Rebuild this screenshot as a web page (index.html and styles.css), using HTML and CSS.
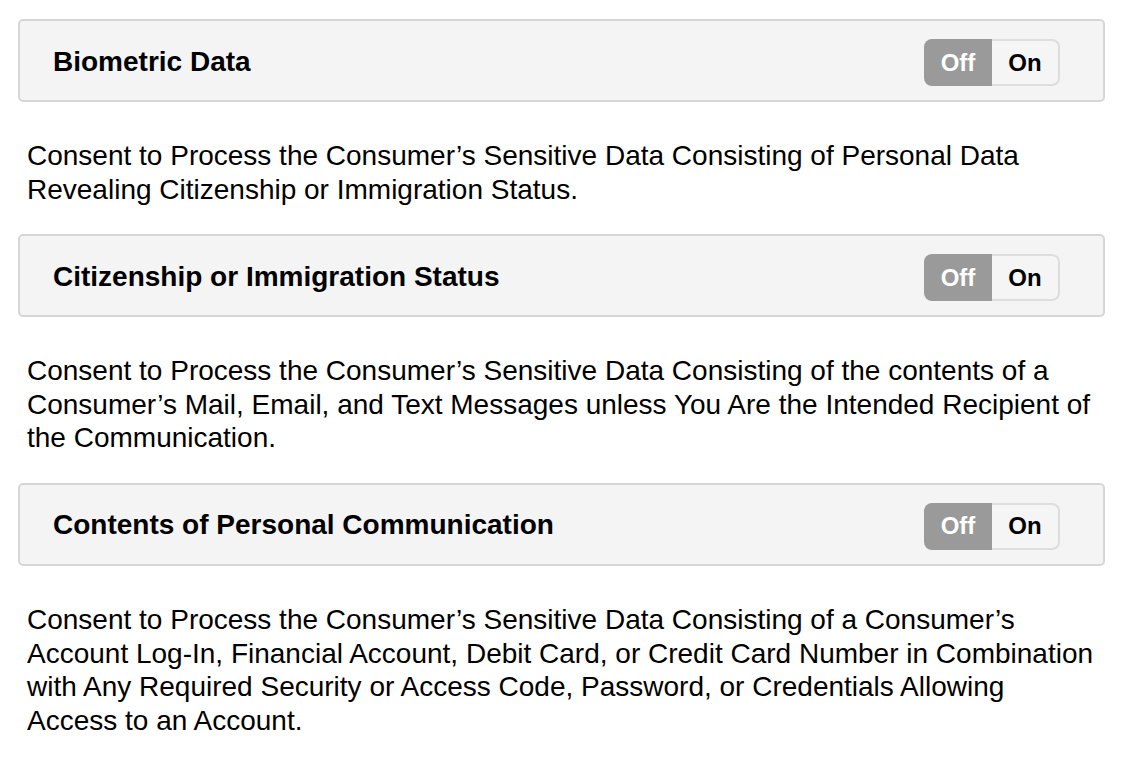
FILE: index.html
```html
<!DOCTYPE html>
<html lang="en">
<head>
    <meta charset="UTF-8">
    <meta name="viewport" content="width=device-width, initial-scale=1.0">
    <title>Sensitive Data Consent</title>
    <link rel="stylesheet" href="styles.css">
</head>
<body>

    <div class="consent-list">
        <div class="consent-panel">
            <h3>Biometric Data</h3>
            <div class="toggle">
                <button class="toggle-off active">Off</button>
                <button class="toggle-on">On</button>
            </div>
        </div>
        <p class="consent-text">Consent to Process the Consumer’s Sensitive Data Consisting of Personal Data Revealing Citizenship or Immigration Status.</p>

        <div class="consent-panel">
            <h3>Citizenship or Immigration Status</h3>
            <div class="toggle">
                <button class="toggle-off active">Off</button>
                <button class="toggle-on">On</button>
            </div>
        </div>
        <p class="consent-text">Consent to Process the Consumer’s Sensitive Data Consisting of the contents of a Consumer’s Mail, Email, and Text Messages unless You Are the Intended Recipient of the Communication.</p>

        <div class="consent-panel">
            <h3>Contents of Personal Communication</h3>
            <div class="toggle">
                <button class="toggle-off active">Off</button>
                <button class="toggle-on">On</button>
            </div>
        </div>
        <p class="consent-text">Consent to Process the Consumer’s Sensitive Data Consisting of a Consumer’s Account Log-In, Financial Account, Debit Card, or Credit Card Number in Combination with Any Required Security or Access Code, Password, or Credentials Allowing Access to an Account.</p>
    </div>

</body>
</html>
```

FILE: styles.css
```css
/* General Body Styles */
body {
    font-family: 'Liberation Sans', Arial, sans-serif;
    background: #fff;
    color: #000;
    margin: 0;
}

.consent-list {
    padding: 19px 19px 0 18px;
}

/* Panel */
.consent-panel {
    display: flex;
    justify-content: space-between;
    align-items: center;
    height: 83px;
    box-sizing: border-box;
    padding: 0 43px 0 33px;
    background-color: #f4f4f4;
    border: 2px solid #d6d6d6;
    border-radius: 5px;
}

.consent-panel h3 {
    margin: 2px 0 0;
    font-size: 28px;
    font-weight: 700;
}

/* Toggle */
.toggle {
    display: flex;
    height: 47px;
    margin-top: 4px;
}

.toggle button {
    font-family: inherit;
    font-size: 24px;
    font-weight: 700;
    width: 68px;
    padding: 0;
    cursor: pointer;
}

.toggle-off {
    background-color: #9a9a9a;
    color: #fff;
    border: none;
    border-radius: 8px 0 0 8px;
}

.toggle-on {
    background-color: #f5f5f5;
    color: #000;
    border: 2px solid #dedede;
    border-left: none;
    border-radius: 0 8px 8px 0;
}

/* Description */
.consent-text {
    margin: 37px 9px 28px 9px;
    font-size: 28px;
    line-height: 33.6px;
}
```
